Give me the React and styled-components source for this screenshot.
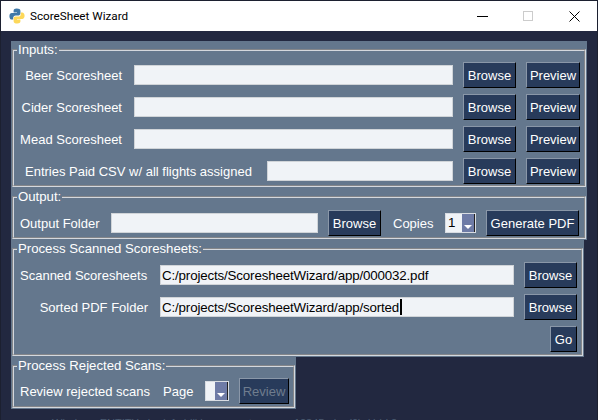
import React from 'react'
import styled, { createGlobalStyle } from 'styled-components'

const Global = createGlobalStyle`
  html, body { margin: 0; padding: 0; background: #222840; }
  body { font-family: "Liberation Sans", Arial, sans-serif; overflow: hidden; }
`

const Screen = styled.div`
  width: 598px;
  height: 420px;
  box-sizing: border-box;
  padding: 1px 1px 0;
  background: #1c2030;
  overflow: hidden;
  position: relative;
`

const TitleBar = styled.div`
  height: 30px;
  background: #fff;
  display: flex;
  align-items: center;
  padding-left: 8px;
  color: #000;
  font-size: 11.7px;
  font-family: Roboto, sans-serif;
`

const TitleText = styled.span`
  margin-left: 5px;
  flex: 1;
`

const WinButton = styled.div`
  width: 46px;
  height: 30px;
  display: flex;
  align-items: center;
  justify-content: center;
`

const Body = styled.div`
  background: #222840;
  height: 388px;
  padding: 10px 10px 0;
  display: flex;
  flex-direction: column;
  align-items: flex-start;
`

const Panel = styled.div`
  background: #64778d;
  width: ${p => p.$w}px;
  height: ${p => p.$h}px;
  box-sizing: border-box;
  padding: 2px 1px 1px;
`

const Group = styled.fieldset`
  margin: 0;
  padding: 0 4px 0 5px;
  border: 2px groove #d4d8de;
  height: 100%;
  box-sizing: border-box;
  min-width: 0;
  display: flex;
  flex-direction: column;
`

const Legend = styled.legend`
  color: #fff;
  font-size: 13.2px;
  line-height: 14px;
  padding: 0 1px;
  margin-left: -2px;
`

const Row = styled.div`
  display: flex;
  align-items: center;
  height: 26px;
  margin-top: ${p => p.$mt || 6}px;
  justify-content: ${p => p.$end ? 'flex-end' : 'flex-start'};
`

const Label = styled.span`
  color: #fff;
  font-size: 13px;
  white-space: nowrap;
  flex: none;
  width: ${p => p.$w ? p.$w + 'px' : 'auto'};
  text-align: ${p => p.$right ? 'right' : 'left'};
  margin-left: ${p => p.$ml || 0}px;
  margin-right: ${p => p.$mr || 0}px;
`

const FieldWrap = styled.div`
  position: relative;
  flex: none;
  margin-right: ${p => p.$mr || 10}px;
`

const Field = styled.input`
  display: block;
  box-sizing: border-box;
  width: ${p => p.$w}px;
  height: 20px;
  margin: 0;
  padding: 0 1px;
  border: 1px solid #d0d4d8;
  background: #f0f3f7;
  color: #000;
  font: 13.33px "Liberation Sans", Arial, sans-serif;
  letter-spacing: -0.15px;
  outline: none;
`

const Caret = styled.span`
  position: absolute;
  left: ${p => p.$x}px;
  top: 2px;
  width: 2px;
  height: 16px;
  background: #000;
`

const Button = styled.button`
  box-sizing: border-box;
  height: 26px;
  width: ${p => p.$w}px;
  margin: 0 ${p => p.$mr || 0}px 0 0;
  padding: 0;
  background: #283b5b;
  color: ${p => p.disabled ? '#6f7d8e' : '#fff'};
  font: 13px "Liberation Sans", Arial, sans-serif;
  white-space: nowrap;
  border: 1px solid;
  border-color: #8a97a8 #000 #000 #8a97a8;
  flex: none;
`

const Spin = styled.div`
  box-sizing: border-box;
  display: flex;
  width: ${p => p.$w}px;
  height: 20px;
  background: #f0f3f7;
  border: 1px solid #d8dce2;
  margin-right: ${p => p.$mr || 0}px;
  flex: none;
`

const SpinValue = styled.span`
  flex: 1;
  font-size: 13.33px;
  line-height: 18px;
  padding-left: 2px;
  color: #000;
`

const SpinArrow = styled.div`
  width: 13px;
  background: #6e7ba6;
  border-right: 1px solid #222;
  display: flex;
  align-items: flex-end;
  justify-content: center;
  padding-bottom: 3px;
  box-sizing: border-box;
  &::after {
    content: "";
    border-left: 4px solid transparent;
    border-right: 4px solid transparent;
    border-top: 4px solid #fff;
  }
`

const BackdropText = styled.div`
  position: absolute;
  left: 52px;
  top: 417px;
  color: #4a5a70;
  font-size: 11px;
  line-height: 12px;
  white-space: nowrap;
`

const PythonLogo = () => (
  <svg width="16" height="16" viewBox="0 0 16 16">
    <path d="M7.8 0.5C5 0.5 4.6 1.6 4.6 2.8V4.4H8V5H2.8C1.4 5 0.4 6.2 0.4 8.2S1.4 11.6 2.8 11.6H4.2V9.8C4.2 8.4 5.3 7.4 6.6 7.4H9.6C10.6 7.4 11.4 6.6 11.4 5.6V2.8C11.4 1.4 10 0.5 7.8 0.5Z" fill="#3e78a8" />
    <path d="M8.2 15.5C11 15.5 11.4 14.4 11.4 13.2V11.6H8V11H13.2C14.6 11 15.6 9.8 15.6 7.8S14.6 4.4 13.2 4.4H11.8V6.2C11.8 7.6 10.7 8.6 9.4 8.6H6.4C5.4 8.6 4.6 9.4 4.6 10.4V13.2C4.6 14.6 6 15.5 8.2 15.5Z" fill="#fdd85a" />
  </svg>
)

const inputRows = ['Beer Scoresheet', 'Cider Scoresheet', 'Mead Scoresheet']

function App() {
  return (
    <Screen>
      <Global />
      <TitleBar>
        <PythonLogo />
        <TitleText>ScoreSheet Wizard</TitleText>
        <WinButton>
          <svg width="11" height="11" viewBox="0 0 11 11"><path d="M0 5.5H11" stroke="#000" /></svg>
        </WinButton>
        <WinButton>
          <svg width="11" height="11" viewBox="0 0 11 11"><rect x="0.5" y="0.5" width="9" height="9" fill="none" stroke="#ccc" /></svg>
        </WinButton>
        <WinButton>
          <svg width="11" height="11" viewBox="0 0 11 11"><path d="M0.5 0.5L10.5 10.5M10.5 0.5L0.5 10.5" stroke="#000" /></svg>
        </WinButton>
      </TitleBar>
      <Body>
        <Panel $w={576} $h={147}>
          <Group>
            <Legend>Inputs:</Legend>
            {inputRows.map((label, i) => (
              <Row key={label} $mt={i === 0 ? 5 : 6}>
                <Label $w={103} $right $mr={12}>{label}</Label>
                <FieldWrap><Field $w={319} /></FieldWrap>
                <Button $w={53} $mr={10}>Browse</Button>
                <Button $w={54}>Preview</Button>
              </Row>
            ))}
            <Row>
              <Label $ml={6} $w={230} $mr={12}>Entries Paid CSV w/ all flights assigned</Label>
              <FieldWrap><Field $w={186} /></FieldWrap>
              <Button $w={53} $mr={10}>Browse</Button>
              <Button $w={54}>Preview</Button>
            </Row>
          </Group>
        </Panel>
        <Panel $w={576} $h={52}>
          <Group>
            <Legend>Output:</Legend>
            <Row>
              <Label $ml={1} $w={79} $mr={12}>Output Folder</Label>
              <FieldWrap><Field $w={207} /></FieldWrap>
              <Button $w={53} $mr={12}>Browse</Button>
              <Label $w={40} $mr={12}>Copies</Label>
              <Spin $w={31} $mr={10}>
                <SpinValue>1</SpinValue>
                <SpinArrow />
              </Spin>
              <Button $w={93}>Generate PDF</Button>
            </Row>
          </Group>
        </Panel>
        <Panel $w={573} $h={117}>
          <Group>
            <Legend>Process Scanned Scoresheets:</Legend>
            <Row>
              <Label $ml={1} $w={128} $mr={12}>Scanned Scoresheets</Label>
              <FieldWrap><Field $w={354} defaultValue="C:/projects/ScoresheetWizard/app/000032.pdf" /></FieldWrap>
              <Button $w={53}>Browse</Button>
            </Row>
            <Row>
              <Label $w={129} $right $mr={12}>Sorted PDF Folder</Label>
              <FieldWrap>
                <Field $w={354} defaultValue="C:/projects/ScoresheetWizard/app/sorted" />
                <Caret $x={240} />
              </FieldWrap>
              <Button $w={53}>Browse</Button>
            </Row>
            <Row $end>
              <Button $w={27}>Go</Button>
            </Row>
          </Group>
        </Panel>
        <Panel $w={285} $h={52}>
          <Group>
            <Legend>Process Rejected Scans:</Legend>
            <Row $mt={5}>
              <Label $ml={1} $w={128} $mr={15}>Review rejected scans</Label>
              <Label $w={29} $mr={13}>Page</Label>
              <Spin $w={24} $mr={10}>
                <SpinValue />
                <SpinArrow />
              </Spin>
              <Button $w={50} disabled>Review</Button>
            </Row>
          </Group>
        </Panel>
      </Body>
      <BackdropText>Windows ENTITY  abcdefg  hijklmn  opqrstuv  wxyz  12345 abc  (0): Hdd 2</BackdropText>
    </Screen>
  )
}

export default App
